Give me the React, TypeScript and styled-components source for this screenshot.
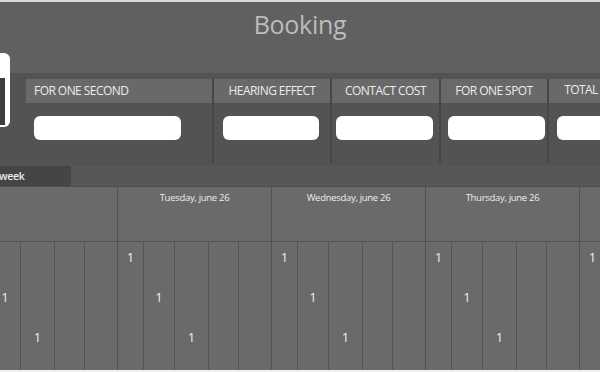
import React from 'react';
import styled, { createGlobalStyle } from 'styled-components';

const GlobalStyle = createGlobalStyle`
  html, body {
    margin: 0;
    padding: 0;
    background: #efefef;
  }
  * {
    box-sizing: border-box;
  }
`;

const Frame = styled.div`
  position: relative;
  width: 100%;
  height: 372px;
  overflow: hidden;
  border-top: 2px solid #d9d9d9;
  border-bottom: 2px solid #efefef;
  font-family: 'Open Sans', 'Liberation Sans', sans-serif;
  display: flex;
  flex-direction: column;
`;

const TitleBar = styled.div`
  height: 71px;
  background: #606060;
  display: flex;
  justify-content: center;
  padding-top: 5px;
`;

const Title = styled.h1`
  margin: 0;
  font-size: 25px;
  font-weight: 400;
  color: #bcbcbc;
  line-height: 34px;
  letter-spacing: -0.3px;
`;

const DeviceCard = styled.div`
  position: absolute;
  left: -40px;
  top: 51px;
  width: 50px;
  height: 74px;
  background: #ffffff;
  border-radius: 6px;
  padding: 25px 5px 2px 0;
  display: flex;
`;

const DeviceScreen = styled.div`
  flex: 1;
  background: #3c3c3c;
`;

const FilterPanel = styled.div`
  height: 93px;
  background: #535353;
  display: flex;
  padding: 6px 0 3px 26px;
`;

const FilterColumn = styled.div<{ $width: number; $first?: boolean }>`
  width: ${(p) => p.$width}px;
  flex-shrink: 0;
  display: flex;
  flex-direction: column;
  border-left: ${(p) => (p.$first ? 'none' : '2px solid #474747')};
`;

const FilterLabel = styled.div<{ $align: 'left' | 'center'; $lift?: number }>`
  height: 24px;
  background: #696969;
  color: #ececec;
  font-size: 12px;
  letter-spacing: -0.55px;
  white-space: nowrap;
  text-align: ${(p) => p.$align};
  padding-left: ${(p) => (p.$align === 'left' ? '8px' : '0')};
  line-height: ${(p) => 24 - (p.$lift || 0) * 2}px;
`;

const FilterInput = styled.div<{ $offset: number; $width: number }>`
  margin: 13px 0 0 ${(p) => p.$offset}px;
  width: ${(p) => p.$width}px;
  height: 24px;
  background: #ffffff;
  border-radius: 6px;
`;

const WeekRow = styled.div`
  height: 21px;
  background: #575757;
  border-bottom: 1px solid #4d4d4d;
  display: flex;
`;

const WeekTab = styled.div`
  width: 72px;
  background: #454545;
  color: #eeeeee;
  font-size: 10.5px;
  font-weight: 600;
  line-height: 20px;
  letter-spacing: -0.3px;
  margin-left: -1px;
`;

const Calendar = styled.div`
  flex: 1;
  display: flex;
  margin-left: -37px;
  background: #6a6a6a;
`;

const Day = styled.div`
  width: 154px;
  flex-shrink: 0;
  display: flex;
  flex-direction: column;
  border-left: 1px solid #525252;
`;

const DayHeader = styled.div`
  height: 55px;
  border-bottom: 1px solid #535353;
  color: #eeeeee;
  font-size: 9.5px;
  letter-spacing: -0.3px;
  text-align: center;
  padding-top: 4px;
  white-space: nowrap;
`;

const DaySlots = styled.div`
  flex: 1;
  display: grid;
  grid-template-columns: 26px 31px 34px 30px 32px;
`;

const Slot = styled.div<{ $row: number | null }>`
  border-right: 1px solid #545454;
  color: #f0f0f0;
  font-size: 13px;
  text-align: center;
  padding-top: ${(p) => (p.$row === null ? 0 : 6 + p.$row * 40)}px;
  &:last-child {
    border-right: none;
  }
`;

const filters = [
  { label: 'FOR ONE SECOND', width: 186, align: 'left' as const, offset: 8, input: 147 },
  { label: 'HEARING EFFECT', width: 118, align: 'center' as const, offset: 9, input: 96 },
  { label: 'CONTACT COST', width: 109, align: 'center' as const, offset: 4, input: 97 },
  { label: 'FOR ONE SPOT', width: 108, align: 'center' as const, offset: 7, input: 97 },
  { label: 'TOTAL', width: 66, align: 'center' as const, offset: 8, input: 97, lift: 1 },
];

// the first day and the last one only peek in at the edges
const days = [
  { title: '', rows: [null, 1, 2, null, null] },
  { title: 'Tuesday, june 26', rows: [0, 1, 2, null, null] },
  { title: 'Wednesday, june 26', rows: [0, 1, 2, null, null] },
  { title: 'Thursday, june 26', rows: [0, 1, 2, null, null] },
  { title: '', rows: [0, null, null, null, null] },
];

export default function App() {
  return (
    <>
      <GlobalStyle />
      <Frame>
        <TitleBar>
          <Title>Booking</Title>
        </TitleBar>

        <DeviceCard>
          <DeviceScreen />
        </DeviceCard>

        <FilterPanel>
          {filters.map((f, i) => (
            <FilterColumn key={f.label} $width={f.width} $first={i === 0}>
              <FilterLabel $align={f.align} $lift={f.lift}>
                {f.label}
              </FilterLabel>
              <FilterInput $offset={f.offset} $width={f.input} />
            </FilterColumn>
          ))}
        </FilterPanel>

        <WeekRow>
          <WeekTab>week</WeekTab>
        </WeekRow>

        <Calendar>
          {days.map((d, i) => (
            <Day key={i}>
              <DayHeader>{d.title}</DayHeader>
              <DaySlots>
                {d.rows.map((r, j) => (
                  <Slot key={j} $row={r}>
                    {r === null ? '' : '1'}
                  </Slot>
                ))}
              </DaySlots>
            </Day>
          ))}
        </Calendar>
      </Frame>
    </>
  );
}
